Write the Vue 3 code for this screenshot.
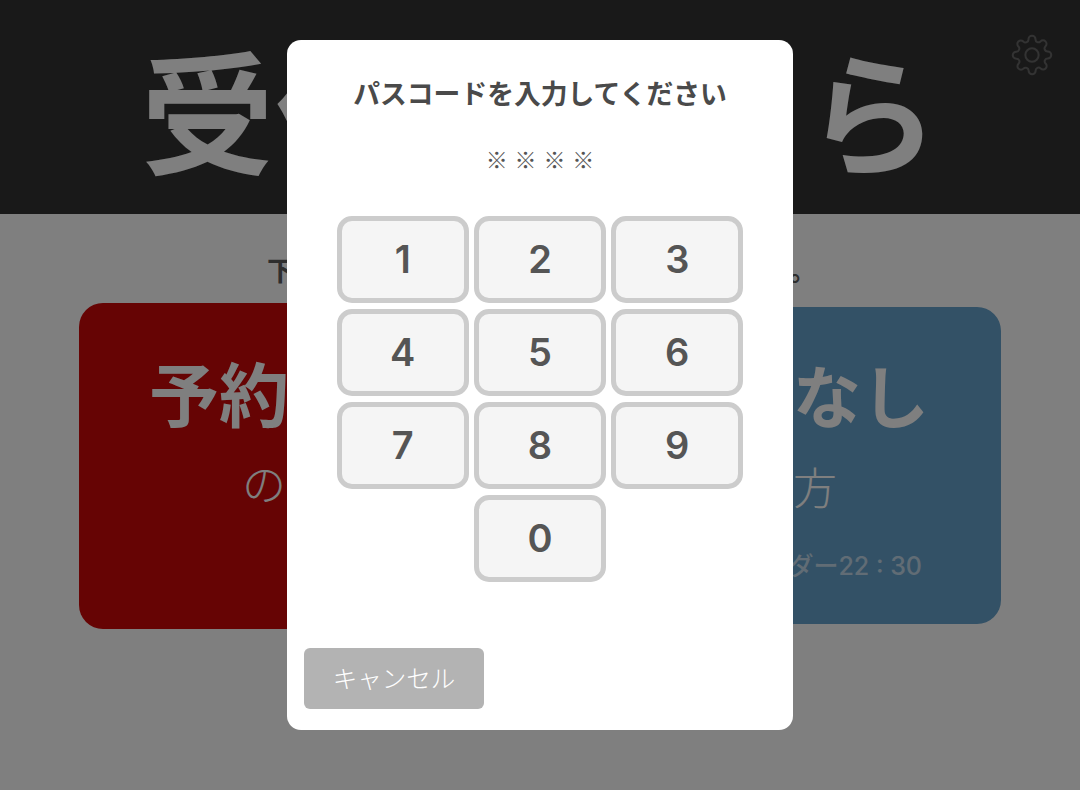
<script setup>
const keys = [1, 2, 3, 4, 5, 6, 7, 8, 9, 0]
</script>

<template>
  <div class="page">
    <header class="head">
      <h1 class="title">受付はこちら</h1>
      <svg class="gear" viewBox="0 0 24 24" fill="none" stroke="#666" stroke-width="1.15" stroke-linecap="round" stroke-linejoin="round">
        <circle cx="12" cy="12" r="3.8" />
        <path d="M19.4 15a1.65 1.65 0 0 0 .33 1.82l.06.06a2 2 0 0 1 0 2.83 2 2 0 0 1-2.83 0l-.06-.06a1.65 1.65 0 0 0-1.82-.33 1.65 1.65 0 0 0-1 1.51V21a2 2 0 0 1-2 2 2 2 0 0 1-2-2v-.09A1.65 1.65 0 0 0 9 19.4a1.65 1.65 0 0 0-1.82.33l-.06.06a2 2 0 0 1-2.83 0 2 2 0 0 1 0-2.83l.06-.06a1.65 1.65 0 0 0 .33-1.82 1.65 1.65 0 0 0-1.51-1H3a2 2 0 0 1-2-2 2 2 0 0 1 2-2h.09A1.65 1.65 0 0 0 4.6 9a1.65 1.65 0 0 0-.33-1.82l-.06-.06a2 2 0 0 1 0-2.83 2 2 0 0 1 2.83 0l.06.06a1.65 1.65 0 0 0 1.82.33H9a1.65 1.65 0 0 0 1-1.51V3a2 2 0 0 1 2-2 2 2 0 0 1 2 2v.09a1.65 1.65 0 0 0 1 1.51 1.65 1.65 0 0 0 1.82-.33l.06-.06a2 2 0 0 1 2.83 0 2 2 0 0 1 0 2.83l-.06.06a1.65 1.65 0 0 0-.33 1.82V9a1.65 1.65 0 0 0 1.51 1H21a2 2 0 0 1 2 2 2 2 0 0 1-2 2h-.09a1.65 1.65 0 0 0-1.51 1z" />
      </svg>
    </header>
    <main class="main">
      <p class="lead">下記のいずれかのボタンを押してください。</p>
      <div class="cards">
        <div class="card card-yes">
          <div class="card-title">予約あり</div>
          <div class="card-sub">の方</div>
        </div>
        <div class="card card-no">
          <div class="card-title small">予約なし</div>
          <div class="card-sub">の方</div>
          <div class="card-note">ラストオーダー22 : 30</div>
        </div>
      </div>
    </main>
    <div class="overlay">
      <div class="modal">
        <h2 class="modal-title">パスコードを入力してください</h2>
        <div class="code">※ ※ ※ ※</div>
        <div class="keypad">
          <button v-for="k in keys" :key="k" class="key" :class="{ zero: k === 0 }">{{ k }}</button>
        </div>
        <button class="cancel">キャンセル</button>
      </div>
    </div>
  </div>
</template>

<style>
html, body { margin: 0; background: #fff; }
</style>

<style scoped>
.page {
  position: relative;
  width: 1080px;
  height: 790px;
  overflow: hidden;
  font-family: Inter, "Noto Sans CJK JP", sans-serif;
  background: #fff;
}
.head {
  position: relative;
  height: 214px;
  background: #333;
  display: flex;
  align-items: center;
  justify-content: center;
}
.title {
  margin: 0;
  color: #fff;
  font-family: "Noto Sans CJK JP", sans-serif;
  font-size: 133px;
  line-height: 1;
  font-weight: 700;
  white-space: nowrap;
}
.gear {
  position: absolute;
  left: 1011px;
  top: 34px;
  width: 42px;
  height: 42px;
}
.main {
  display: flex;
  flex-direction: column;
  align-items: center;
  background: #fff;
}
.lead {
  margin: 37px 0 0;
  color: #5c5c5c;
  font-family: "Noto Sans CJK JP", sans-serif;
  font-size: 27.6px;
  line-height: 36px;
  font-weight: 700;
  white-space: nowrap;
  transform: translateX(2px);
}
.cards {
  align-self: stretch;
  display: flex;
  align-items: flex-start;
  justify-content: space-between;
  padding: 0 79px;
  margin-top: 16px;
}
.card {
  box-sizing: border-box;
  display: flex;
  flex-direction: column;
  align-items: center;
  color: #fff;
  border-radius: 24px;
}
.card-yes {
  width: 422px;
  height: 326px;
  background: #cc0808;
  padding: 43px 2px 0 0;
}
.card-no {
  width: 408px;
  height: 317px;
  margin-top: 4px;
  background: #66a2cc;
  padding: 42px 8px 0 0;
}
.card-title {
  font-family: "Noto Sans CJK JP", sans-serif;
  font-size: 70px;
  line-height: 92px;
  font-weight: 700;
}
.card-title.small { font-size: 68px; line-height: 90px; }
.card-sub {
  margin-top: 17px;
  font-size: 44px;
  line-height: 60px;
  font-weight: 300;
}
.card-yes .card-sub { margin-right: 6px; }
.card-title.small + .card-sub { margin-top: 20px; }
.card-note {
  margin-top: 30px;
  font-size: 25px;
  line-height: 34px;
  font-weight: 500;
  opacity: 0.6;
  white-space: nowrap;
}
.overlay {
  position: absolute;
  inset: 0;
  background: rgba(0, 0, 0, 0.5);
  display: flex;
  justify-content: center;
  align-items: flex-start;
  padding-top: 40px;
}
.modal {
  box-sizing: border-box;
  position: relative;
  width: 506px;
  height: 690px;
  background: #fff;
  border-radius: 14px;
  display: flex;
  flex-direction: column;
  align-items: center;
  padding-top: 34px;
}
.modal-title {
  margin: 0;
  color: #4a4a4a;
  font-size: 26.8px;
  line-height: 40px;
  font-weight: 700;
  white-space: nowrap;
}
.code {
  margin-top: 25px;
  color: #555;
  font-family: "Noto Sans CJK JP", sans-serif;
  font-size: 22px;
  line-height: 38px;
  font-weight: 300;
  word-spacing: 2px;
  white-space: nowrap;
}
.keypad {
  display: grid;
  grid-template-columns: repeat(3, 132px);
  grid-auto-rows: 87px;
  column-gap: 5.25px;
  row-gap: 6px;
  margin-top: 39px;
}
.key {
  box-sizing: border-box;
  margin: 0;
  padding: 0 0 2px;
  background: #f5f5f5;
  border: 5px solid #ccc;
  border-radius: 15px;
  color: #555;
  font-family: inherit;
  font-size: 38px;
  font-weight: 600;
}
.key.zero { grid-column: 2; }
.cancel {
  position: absolute;
  left: 17px;
  bottom: 21px;
  width: 180px;
  height: 61px;
  margin: 0;
  padding: 0 0 3px;
  border: 0;
  border-radius: 6px;
  background: #b3b3b3;
  color: #fff;
  font-family: inherit;
  font-size: 24.5px;
  font-weight: 300;
}
</style>
